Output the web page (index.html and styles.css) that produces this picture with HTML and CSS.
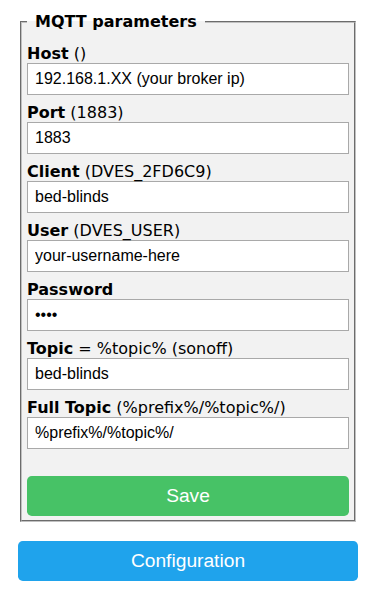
FILE: index.html
```html
<!DOCTYPE html>
<html>
<head>
	<meta charset="utf-8">
	<title>MQTT parameters</title>
	<link rel="stylesheet" href="styles.css">
</head>
<body>
<div class="wrap">
	<form class="mqtt">
		<fieldset>
			<legend><b>MQTT parameters</b></legend>
			<div class="field">
				<label><b>Host</b> ()</label>
				<input type="text" value="192.168.1.XX (your broker ip)">
			</div>
			<div class="field">
				<label><b>Port</b> (1883)</label>
				<input type="text" value="1883">
			</div>
			<div class="field">
				<label><b>Client</b> (DVES_2FD6C9)</label>
				<input type="text" value="bed-blinds">
			</div>
			<div class="field">
				<label><b>User</b> (DVES_USER)</label>
				<input type="text" value="your-username-here">
			</div>
			<div class="field">
				<label><b>Password</b></label>
				<input type="password" value="1234">
			</div>
			<div class="field">
				<label><b>Topic</b> = %topic% (sonoff)</label>
				<input type="text" value="bed-blinds">
			</div>
			<div class="field">
				<label><b>Full Topic</b> (%prefix%/%topic%/)</label>
				<input type="text" value="%prefix%/%topic%/">
			</div>
			<button type="button" class="button bgrn">Save</button>
		</fieldset>
	</form>
	<button type="button" class="button">Configuration</button>
</div>
</body>
</html>
```
FILE: styles.css
```css
		body{
			margin:0;
			padding:12px 17px 0 18px;
			background-color:#fff;
			color:#000;
			font-family:"DejaVu Sans",Verdana,sans-serif;
			font-size:16px;
		}
		.wrap{
			width:340px;
		}
		.mqtt{
			margin:0;
		}
		fieldset{
			margin:0 2px;
			padding:5px 5px 4px 5px;
			border:2px groove #c0c0c0;
			background-color:#f2f2f2;
		}
		legend{
			padding:0 8px;
			line-height:19px;
		}
		.field{
			margin-top:9px;
		}
		.field label{
			display:block;
			line-height:18px;
		}
		.field input{
			display:block;
			width:100%;
			height:32px;
			box-sizing:border-box;
			margin:0;
			padding:0 7px;
			border:1px solid #a9a9a9;
			background-color:#fff;
			color:#000;
			font-family:"Liberation Sans",Arial,sans-serif;
			font-size:16px;
		}
		.button{
			display:block;
			width:100%;
			height:40px;
			border:0;
			border-radius:0.3rem;
			background-color:#1fa3ec;
			color:#fff;
			font-family:"Liberation Sans",Arial,sans-serif;
			font-size:1.2rem;
			padding:0;
			margin-top:19px;
		}
		.bgrn{
			background-color:#47c266;
			margin-top:27px;
		}
```
